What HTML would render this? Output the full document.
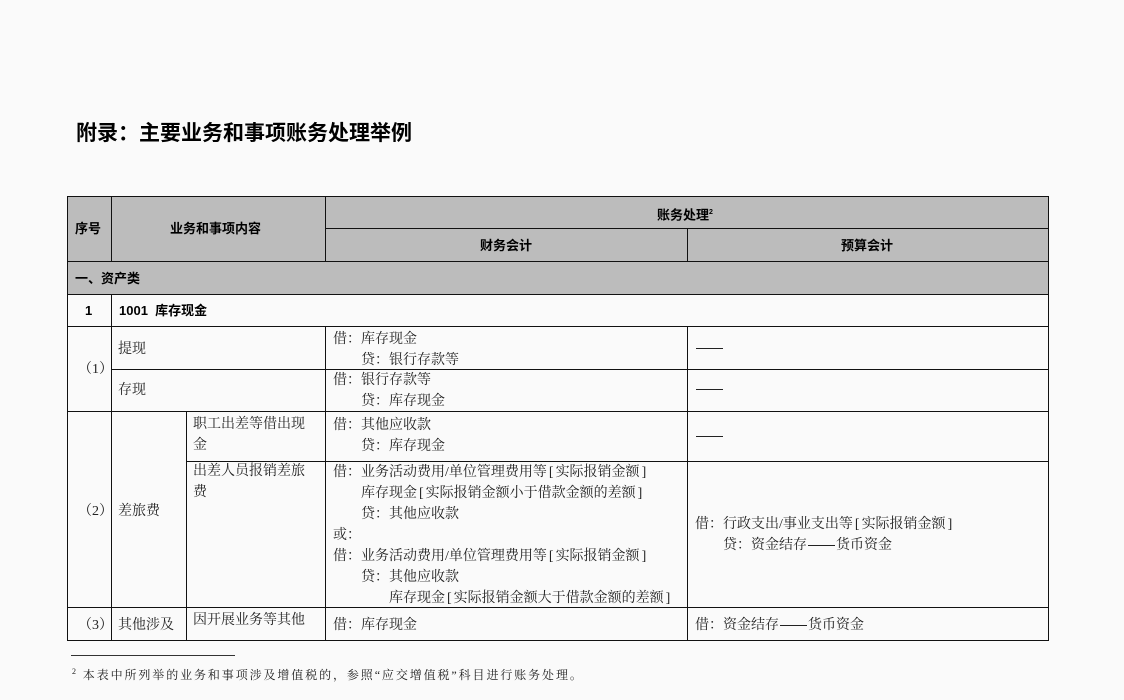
<!DOCTYPE html>
<html><head><meta charset="utf-8"><style>
body{margin:0;width:1124px;height:700px;background:#fafafa;position:relative;overflow:hidden;font-family:"Liberation Serif","Noto Serif CJK SC","Noto Sans CJK SC",serif;color:#222}
.h{position:absolute;height:1px;background:#111}
.v{position:absolute;width:1px;background:#111}
.bg{position:absolute;background:#bcbcbc}
.t{position:absolute;font-size:14px;line-height:21px;white-space:nowrap}
.b{font-family:"Liberation Sans","Noto Sans CJK SC",sans-serif;font-weight:bold;font-size:13px;color:#000}
.d{display:inline-block;width:27px;height:1px;background:#222;vertical-align:middle;margin:0 1px}
.k{margin:0 2px}
</style></head><body>
<div class="t b" style="left:76px;top:121px;font-size:21px;line-height:26px">附录：主要业务和事项账务处理举例</div>

<div class="bg" style="left:67px;top:196px;width:981px;height:98px"></div>

<div class="h" style="left:67px;top:196px;width:982px"></div>
<div class="h" style="left:325px;top:228px;width:724px"></div>
<div class="h" style="left:67px;top:261px;width:982px"></div>
<div class="h" style="left:67px;top:294px;width:982px"></div>
<div class="h" style="left:67px;top:326px;width:982px"></div>
<div class="h" style="left:111px;top:369px;width:938px"></div>
<div class="h" style="left:67px;top:411px;width:982px"></div>
<div class="h" style="left:186px;top:461px;width:863px"></div>
<div class="h" style="left:67px;top:607px;width:982px"></div>
<div class="h" style="left:67px;top:640px;width:982px"></div>
<div class="v" style="left:67px;top:196px;height:445px"></div>
<div class="v" style="left:1048px;top:196px;height:445px"></div>
<div class="v" style="left:111px;top:196px;height:65px"></div>
<div class="v" style="left:325px;top:196px;height:65px"></div>
<div class="v" style="left:687px;top:228px;height:33px"></div>
<div class="v" style="left:111px;top:294px;height:347px"></div>
<div class="v" style="left:325px;top:326px;height:315px"></div>
<div class="v" style="left:687px;top:326px;height:315px"></div>
<div class="v" style="left:186px;top:411px;height:230px"></div>

<div class="t b" style="left:75px;top:218px">序号</div>
<div class="t b" style="left:170px;top:218px">业务和事项内容</div>
<div class="t b" style="left:657px;top:202px">账务处理<sup style="font-size:7px">2</sup></div>
<div class="t b" style="left:480px;top:235px">财务会计</div>
<div class="t b" style="left:841px;top:235px">预算会计</div>
<div class="t b" style="left:75px;top:268px">一、资产类</div>
<div class="t b" style="left:85px;top:300px">1</div>
<div class="t b" style="left:119px;top:300px">1001&nbsp; 库存现金</div>

<div class="t" style="left:78px;top:359px">（1）</div>
<div class="t" style="left:118px;top:339px">提现</div>
<div class="t" style="left:333px;top:329px">借：库存现金<br>&emsp;&emsp;贷：银行存款等</div>
<div class="t" style="left:695px;top:338px"><span class="d"></span></div>
<div class="t" style="left:118px;top:380px">存现</div>
<div class="t" style="left:333px;top:370px">借：银行存款等<br>&emsp;&emsp;贷：库存现金</div>
<div class="t" style="left:695px;top:379px"><span class="d"></span></div>

<div class="t" style="left:78px;top:501px">（2）</div>
<div class="t" style="left:118px;top:501px">差旅费</div>
<div class="t" style="left:193px;top:414px">职工出差等借出现<br>金</div>
<div class="t" style="left:333px;top:415px">借：其他应收款<br>&emsp;&emsp;贷：库存现金</div>
<div class="t" style="left:695px;top:426px"><span class="d"></span></div>
<div class="t" style="left:193px;top:461px">出差人员报销差旅<br>费</div>
<div class="t" style="left:333px;top:462px">借：业务活动费用/单位管理费用等<span class="k">[</span>实际报销金额<span class="k">]</span><br>&emsp;&emsp;库存现金<span class="k">[</span>实际报销金额小于借款金额的差额<span class="k">]</span><br>&emsp;&emsp;贷：其他应收款<br>或：<br>借：业务活动费用/单位管理费用等<span class="k">[</span>实际报销金额<span class="k">]</span><br>&emsp;&emsp;贷：其他应收款<br>&emsp;&emsp;&emsp;&emsp;库存现金<span class="k">[</span>实际报销金额大于借款金额的差额<span class="k">]</span></div>
<div class="t" style="left:695px;top:514px">借：行政支出/事业支出等<span class="k">[</span>实际报销金额<span class="k">]</span><br>&emsp;&emsp;贷：资金结存<span class="d"></span>货币资金</div>

<div class="t" style="left:78px;top:615px">（3）</div>
<div class="t" style="left:118px;top:615px">其他涉及</div>
<div class="t" style="left:193px;top:610px">因开展业务等其他</div>
<div class="t" style="left:333px;top:615px">借：库存现金</div>
<div class="t" style="left:695px;top:615px">借：资金结存<span class="d"></span>货币资金</div>

<div class="h" style="left:71px;top:655px;width:164px;background:#333"></div>
<div class="t" style="left:72px;top:661px;font-size:12px;letter-spacing:1.9px"><sup style="font-size:8px">2</sup> 本表中所列举的业务和事项涉及增值税的，参照“应交增值税”科目进行账务处理。</div>
</body></html>
